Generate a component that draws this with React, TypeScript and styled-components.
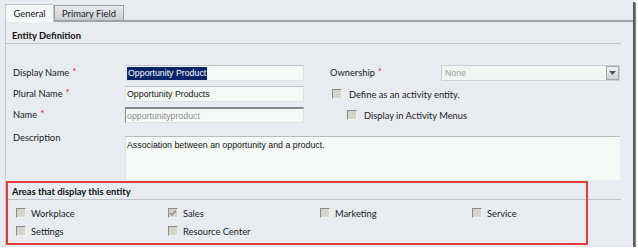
import React from "react";
import styled, { createGlobalStyle } from "styled-components";

const Global = createGlobalStyle`
  html, body { margin: 0; padding: 0; background: #ffffff; }
  body { font-family: Lato, "Open Sans", sans-serif; }
`;

const Frame = styled.div`
  width: 633px;
  height: 247px;
  background: #e8ebf0;
  display: flex;
  flex-direction: column;
  box-shadow: 2px 2px 0 #5a5a5a, 3px 3px 1px #8a8a8a;
  overflow: hidden;
`;

const TabBar = styled.div`
  display: flex;
  align-items: flex-end;
  padding: 4px 0 0 5px;
  height: 18px;
`;

const Tab = styled.div<{ $active?: boolean; $w: number }>`
  width: ${(p) => p.$w}px;
  height: ${(p) => (p.$active ? "18px" : "17px")};
  box-sizing: border-box;
  display: flex;
  align-items: center;
  justify-content: center;
  font-size: 9.4px;
  color: #222;
  border: 1px solid ${(p) => (p.$active ? "#c4c8cc" : "#9ca0a4")};
  border-bottom: ${(p) => (p.$active ? "none" : "2px solid #9ea3a8")};
  background: ${(p) =>
    p.$active ? "#f3f7f6" : "linear-gradient(#e9ebed, #c9cdd1)"};
`;

const TabFill = styled.div`
  flex: 1;
  border-bottom: 2px solid #9ea3a8;
  align-self: stretch;
`;

const Body = styled.div`
  flex: 1;
  border-left: 1px solid #c6cacf;
  margin-left: 5px;
  display: flex;
  flex-direction: column;
  position: relative;
`;

const SectionHead = styled.div<{ $h: number }>`
  height: ${(p) => p.$h}px;
  box-sizing: border-box;
  margin-right: 12px;
  padding-left: 6px;
  border-bottom: 1px solid #bfc3c8;
  display: flex;
  align-items: flex-end;
  padding-bottom: 2px;
  font-weight: 700;
  font-size: 9.4px;
  color: #111;
`;

const FormGrid = styled.div`
  display: grid;
  grid-template-columns: 112px 179px 26px 111px 179px;
  grid-template-rows: 16px 16px 16px auto;
  row-gap: 5px;
  margin-top: 21px;
  padding-left: 7px;
`;

const Label = styled.div<{ $col: number; $top?: boolean }>`
  grid-column: ${(p) => p.$col};
  display: flex;
  align-items: ${(p) => (p.$top ? "flex-start" : "center")};
  padding-top: ${(p) => (p.$top ? "2px" : "0")};
  font-size: 9.3px;
  color: #1a1a1a;
  line-height: 16px;
`;

const Req = styled.span`
  color: #e02020;
  margin-left: 3px;
  font-size: 10px;
  position: relative;
  top: -2px;
`;

const Input = styled.div<{ $disabled?: boolean }>`
  grid-column: 2;
  box-sizing: border-box;
  height: 16px;
  background: #f5f9f6;
  border: 1px solid #dde1e4;
  border-top: 1px solid #bfc3c7;
  ${(p) =>
    p.$disabled
      ? "border-top: 2px solid #85898d; border-left: 1px solid #85898d;"
      : ""}
  display: flex;
  align-items: center;
  padding-left: 1px;
  font-family: "Liberation Sans", Arial, sans-serif;
  font-size: 8.8px;
  color: ${(p) => (p.$disabled ? "#8c8c8c" : "#111")};
`;

const Selected = styled.span`
  background: #0a246a;
  color: #fff;
  padding: 1px 1px;
  line-height: 11px;
`;

const Select = styled.div`
  grid-column: 5;
  box-sizing: border-box;
  height: 16px;
  background: #f2f6f3;
  border: 1px solid #cbcfd3;
  display: flex;
  align-items: center;
  justify-content: space-between;
  padding-left: 3px;
  font-family: "Liberation Sans", Arial, sans-serif;
  font-size: 8.8px;
  color: #9a9a9a;
`;

const Arrow = styled.div`
  width: 13px;
  height: 14px;
  box-sizing: border-box;
  border: 1px solid #a4a8ac;
  background: linear-gradient(#f2f2f2, #cdd1d5);
  display: flex;
  align-items: center;
  justify-content: center;
`;

const CheckRow = styled.div<{ $indent?: number }>`
  grid-column: 4 / span 2;
  display: flex;
  align-items: center;
  gap: 7px;
  padding-left: ${(p) => p.$indent ?? 2}px;
  font-size: 9.3px;
  color: #1a1a1a;
`;

const Box = styled.span`
  width: 10px;
  height: 10px;
  box-sizing: border-box;
  flex: none;
  background: #d5d5cd;
  border-top: 1px solid #8b8b86;
  border-left: 1px solid #8b8b86;
  border-right: 1px solid #f2f2f0;
  border-bottom: 1px solid #f2f2f0;
  display: flex;
  align-items: center;
  justify-content: center;
`;

const TextArea = styled.div`
  grid-column: 2 / span 4;
  margin-top: 8px;
  height: 44px;
  box-sizing: border-box;
  background: #f5f9f5;
  border-top: 1px solid #b8bcc0;
  border-left: 1px solid #dde1e4;
  padding: 3px 1px;
  font-family: "Liberation Sans", Arial, sans-serif;
  font-size: 8.8px;
  color: #111;
`;

const Areas = styled.div`
  position: relative;
  margin-top: 1px;
  display: flex;
  flex-direction: column;
`;

const AreaGrid = styled.div`
  display: grid;
  grid-template-columns: repeat(4, 152px);
  grid-auto-rows: 18px;
  padding-left: 10px;
  margin-top: 4px;
`;

const AreaItem = styled.div`
  display: flex;
  align-items: center;
  gap: 5px;
  font-size: 9.3px;
  color: #1a1a1a;
`;

const Callout = styled.div`
  position: absolute;
  left: 0;
  top: 0;
  width: 582px;
  height: 64px;
  box-sizing: border-box;
  border: 2px solid #e63b3b;
  pointer-events: none;
`;

const Check = ({ checked }: { checked?: boolean }) => (
  <Box>
    {checked && (
      <svg width="8" height="8" viewBox="0 0 8 8">
        <path d="M1 4 L3 6 L7 1.5" stroke="#8a8a8a" strokeWidth="1.3" fill="none" />
      </svg>
    )}
  </Box>
);

export default function App() {
  const areas: [string, boolean][] = [
    ["Workplace", false],
    ["Sales", true],
    ["Marketing", false],
    ["Service", false],
    ["Settings", false],
    ["Resource Center", false],
  ];
  return (
    <>
      <Global />
      <Frame>
        <TabBar>
          <Tab $active $w={49}>General</Tab>
          <Tab $w={70}>Primary Field</Tab>
          <TabFill />
        </TabBar>
        <Body>
          <SectionHead $h={22}>Entity Definition</SectionHead>
          <FormGrid>
            <Label $col={1}>
              Display Name<Req>*</Req>
            </Label>
            <Input>
              <Selected>Opportunity Product</Selected>
            </Input>
            <Label $col={4}>
              Ownership<Req>*</Req>
            </Label>
            <Select>
              None
              <Arrow>
                <svg width="7" height="4" viewBox="0 0 7 4">
                  <path d="M0 0 H7 L3.5 4 Z" fill="#555" />
                </svg>
              </Arrow>
            </Select>

            <Label $col={1}>
              Plural Name<Req>*</Req>
            </Label>
            <Input>Opportunity Products</Input>
            <CheckRow>
              <Check />
              Define as an activity entity.
            </CheckRow>

            <Label $col={1}>
              Name<Req>*</Req>
            </Label>
            <Input $disabled>opportunityproduct</Input>
            <CheckRow $indent={17}>
              <Check />
              Display in Activity Menus
            </CheckRow>

            <Label $col={1} $top>
              Description
            </Label>
            <TextArea>Association between an opportunity and a product.</TextArea>
          </FormGrid>
          <Areas>
            <SectionHead $h={19}>Areas that display this entity</SectionHead>
            <AreaGrid>
              {areas.map(([name, c]) => (
                <AreaItem key={name}>
                  <Check checked={c} />
                  {name}
                </AreaItem>
              ))}
            </AreaGrid>
            <Callout />
          </Areas>
        </Body>
      </Frame>
    </>
  );
}
